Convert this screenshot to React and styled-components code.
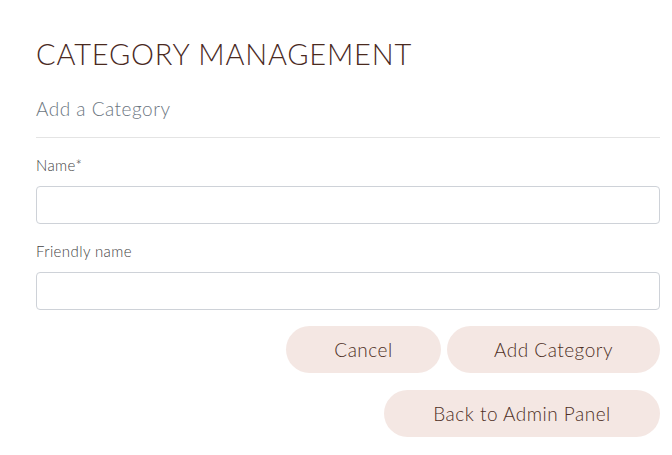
import React from "react";
import styled, { createGlobalStyle } from "styled-components";

const Global = createGlobalStyle`
  html, body { margin: 0; padding: 0; background: #fff; }
  body { font-family: "Lato", "Noto Sans", sans-serif; font-weight: 300; }
  * { box-sizing: border-box; }
`;

const Page = styled.main`
  padding: 32px 12px 0 36px;
  width: 672px;
`;

const Title = styled.h1`
  margin: 0;
  font-weight: 300;
  font-size: 29px;
  line-height: 44px;
  letter-spacing: 0.8px;
  color: #4a2a1f;
`;

const Subtitle = styled.h2`
  margin: 21px 0 0;
  font-weight: 300;
  font-size: 19px;
  line-height: 24px;
  color: #6c7681;
  letter-spacing: 0.5px;
`;

const Divider = styled.hr`
  margin: 16px 0 0;
  border: 0;
  border-top: 1px solid #e4e4e4;
`;

const Form = styled.form`
  display: flex;
  flex-direction: column;
  padding-top: 17px;
`;

const Field = styled.div`
  display: flex;
  flex-direction: column;
  margin-bottom: 17px;
`;

const Label = styled.label`
  font-size: 15px;
  line-height: 20px;
  color: #444;
  letter-spacing: 0.4px;
  margin-bottom: 11px;
`;

const Input = styled.input`
  height: 38px;
  width: 100%;
  border: 1px solid #ced2d8;
  border-radius: 4px;
  padding: 6px 12px;
  font: inherit;
  background: #fff;
`;

const Actions = styled.div`
  display: flex;
  justify-content: flex-end;
  gap: 6px;
  margin-top: -1px;
`;

const Pill = styled.button`
  height: 47px;
  width: ${(p) => p.$w}px;
  border: 0;
  border-radius: 24px;
  background: #f4e7e3;
  color: #4e2f25;
  font-family: inherit;
  font-weight: 300;
  font-size: 19px;
  letter-spacing: 0.5px;
  cursor: pointer;
`;

const Footer = styled.div`
  display: flex;
  justify-content: flex-end;
  margin-top: 17px;
`;

export default function App() {
  return (
    <>
      <Global />
      <Page>
        <Title>CATEGORY MANAGEMENT</Title>
        <Subtitle>Add a Category</Subtitle>
        <Divider />
        <Form onSubmit={(e) => e.preventDefault()}>
          <Field>
            <Label htmlFor="name">Name*</Label>
            <Input id="name" />
          </Field>
          <Field>
            <Label htmlFor="friendly">Friendly name</Label>
            <Input id="friendly" />
          </Field>
          <Actions>
            <Pill type="button" $w={155}>Cancel</Pill>
            <Pill type="submit" $w={213}>Add Category</Pill>
          </Actions>
        </Form>
        <Footer>
          <Pill type="button" $w={276}>Back to Admin Panel</Pill>
        </Footer>
      </Page>
    </>
  );
}
